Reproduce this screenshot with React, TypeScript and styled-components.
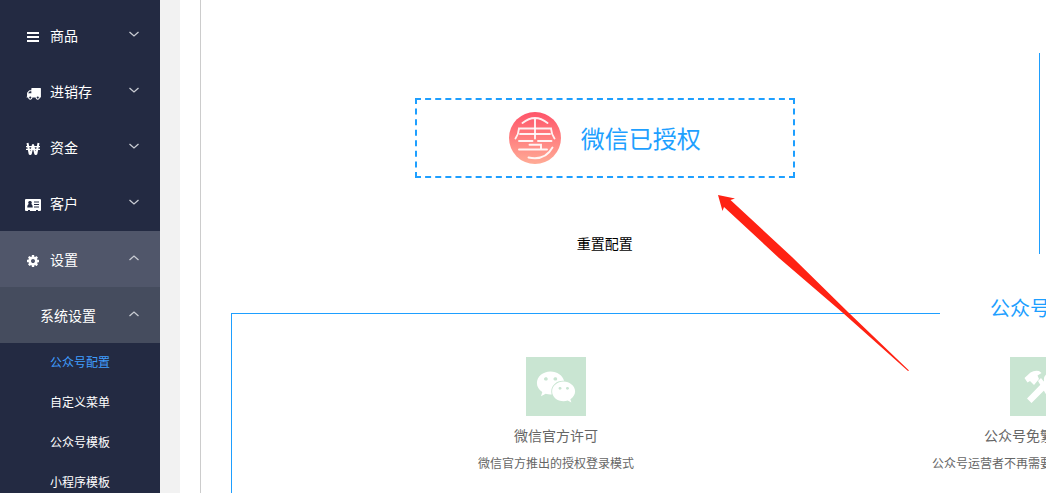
import React from "react";
import styled, { createGlobalStyle } from "styled-components";
import { FaWeixin } from "react-icons/fa";

const GlobalStyle = createGlobalStyle`
  * { box-sizing: border-box; }
  body {
    margin: 0;
    overflow: hidden;
    background: #f2f2f2;
    font-family: "Liberation Sans", "Noto Sans CJK SC", sans-serif;
    font-size: 14px;
    line-height: 20px;
    color: #000;
  }
  button { border: 0; padding: 0; background: none; font: inherit; color: inherit; cursor: pointer; }
`;

const Shell = styled.div`
  display: flex;
  height: 100vh;
  overflow: hidden;
`;

const Sidebar = styled.nav`
  flex: 0 0 160px;
  padding-top: 7px;
  overflow: hidden;
  background: #232a42;
  color: #fff;
`;

const MenuButton = styled.button<{ $tone?: "open" | "group" }>`
  display: flex;
  align-items: center;
  width: 100%;
  height: 56px;
  padding: 0 20px 0 ${(p) => (p.$tone === "group" ? 40 : 24)}px;
  background: ${(p) =>
    p.$tone === "open" ? "#50566a" : p.$tone === "group" ? "#454c5e" : "transparent"};
  text-align: left;
`;

const MenuIcon = styled.svg`
  width: 18px;
  height: 18px;
  margin: 4px 8px 0 0;
  fill: #fff;
`;

const MenuLabel = styled.span`
  flex: 1;
  padding-top: 1px;
  line-height: 20px;
`;

const Chevron = styled.svg<{ $up?: boolean }>`
  width: 12px;
  height: 8px;
  margin-bottom: 2px;
  fill: none;
  stroke: #c9ccd3;
  transform: ${(p) => (p.$up ? "rotate(180deg)" : "none")};
`;

const SubLink = styled.a<{ $active?: boolean }>`
  display: block;
  padding-left: 50px;
  font-size: 12px;
  line-height: 40px;
  color: ${(p) => (p.$active ? "#409eff" : "#fff")};
  text-decoration: none;
`;

const Main = styled.main`
  flex: 1;
  min-width: 0;
  margin-left: 20px;
  padding-left: 20px;
  overflow: hidden;
  background: #fff;
`;

const Workbench = styled.div`
  position: relative;
  min-width: 1678px;
  min-height: 100%;
  padding: 53px 30px 0;
  border-left: 1px solid #ccc;
`;

const Accounts = styled.section`
  display: grid;
  grid-template-columns: 1fr 1fr;
  height: 200px;
`;

const AuthPane = styled.div`
  display: flex;
  flex-direction: column;
  align-items: center;
  padding: 45px 60px 0 0;
  border-right: 1px solid #1e9fff;
`;

const AuthBox = styled.div`
  display: flex;
  align-items: center;
  justify-content: center;
  gap: 20px;
  width: 380px;
  height: 80px;
  border: 2px dashed #1e9fff;
  color: #1e9fff;
  font-size: 24px;
  line-height: 32px;
`;

const AuthState = styled.span`
  padding-top: 4px;
`;

const ResetButton = styled.button`
  margin-top: 56px;
  line-height: 20px;
`;

const Features = styled.fieldset`
  height: 300px;
  margin: 46px 0 0;
  padding: 30px 82px 0;
  border: 1px solid #1e9fff;
  border-width: 1px 0 0 1px;
`;

const FeaturesTitle = styled.legend`
  width: 200px;
  margin: 0 auto;
  padding: 0 50px 8px;
  color: #1e9fff;
  font-size: 20px;
  line-height: 20px;
`;

const FeatureGrid = styled.div`
  display: grid;
  grid-template-columns: repeat(3, 1fr);
`;

const Feature = styled.article`
  display: flex;
  flex-direction: column;
  align-items: center;
  color: #666;
`;

const FeatureTile = styled.div`
  display: flex;
  align-items: center;
  justify-content: center;
  width: 60px;
  height: 59px;
  background: #c9e5d2;
  color: #fff;
`;

const FeatureName = styled.h3<{ $wide?: boolean }>`
  min-width: ${(p) => (p.$wide ? 112 : 0)}px;
  margin: 10px 0 0;
  font-size: 14px;
  font-weight: 400;
  line-height: 20px;
`;

const FeatureText = styled.p<{ $wide?: boolean }>`
  min-width: ${(p) => (p.$wide ? 216 : 0)}px;
  margin: 8px 0 0;
  font-size: 12px;
  line-height: 20px;
`;

const Arrow = styled.svg`
  position: absolute;
  top: 190px;
  left: 510px;
  width: 205px;
  height: 185px;
  fill: #ff2213;
  pointer-events: none;
`;

const BarsIcon = () => (
  <MenuIcon viewBox="0 0 18 18" aria-hidden="true">
    <path d="M3 4h12v2H3zM3 8h12v2H3zM3 12h12v2H3z" />
  </MenuIcon>
);

const TruckIcon = () => (
  <MenuIcon viewBox="-240 -224 2160 2160" aria-hidden="true">
    <path d="M640 1408q0-52-38-90t-90-38-90 38-38 90 38 90 90 38 90-38 38-90zm-384-512h384v-256h-158q-13 0-22 9l-195 195q-9 9-9 22v30zm1280 512q0-52-38-90t-90-38-90 38-38 90 38 90 90 38 90-38 38-90zm256-1088v1024q0 15-4 26.500t-13.500 18.500-16.500 11.500-23.500 6-22.500 2-25.500 0-22.500-.5q0 106-75 181t-181 75-181-75-75-181h-384q0 106-75 181t-181 75-181-75-75-181h-64q-3 0-22.500.5t-25.500 0-22.500-2-23.500-6-16.500-11.500-13.500-18.500-4-26.500q0-26 19-45t45-19v-320q0-8-.5-35t0-38 2.500-34.500 6.500-37 14-30.500 22.500-30l198-198q19-19 50.500-32t58.500-13h160v-192q0-26 19-45t45-19h1024q26 0 45 19t19 45z" />
  </MenuIcon>
);

const WonIcon = () => (
  <MenuIcon viewBox="0 0 18 18" aria-hidden="true">
    <path
      d="M3.500 3l2.200 11h1L9 4.500 11.300 14h1l2.200-11"
      fill="none"
      stroke="#fff"
      strokeWidth="2"
      strokeLinejoin="bevel"
    />
    <path d="M2 6h14v1.300H2zM2 8.700h14V10H2z" />
  </MenuIcon>
);

const CardIcon = () => (
  <MenuIcon viewBox="0 0 18 18" aria-hidden="true">
    <path
      fillRule="evenodd"
      d="M2 3h14a1 1 0 0 1 1 1v10a1 1 0 0 1-1 1h-2v-1h-2v1H6v-1H4v1H2a1 1 0 0 1-1-1V4a1 1 0 0 1 1-1zM6 5a1.700 1.700 0 0 0-1.200 3C3.700 8.500 3.300 9.500 3.300 11.500h5.400c0-2-.4-3-1.500-3.500A1.700 1.700 0 0 0 6 5zM10 5.500v1h5v-1zM10 8v1h5V8zM10 10.500v1h5v-1z"
    />
  </MenuIcon>
);

const CogIcon = () => (
  <MenuIcon viewBox="-256 -256 2304 2304" aria-hidden="true">
    <path d="M1152 896q0-106-75-181t-181-75-181 75-75 181 75 181 181 75 181-75 75-181zm512-109v222q0 12-8 23t-20 13l-185 28q-19 54-39 91 35 50 107 138 10 12 10 25t-9 23q-27 37-99 108t-94 71q-12 0-26-9l-138-108q-44 23-91 38-16 136-29 186-7 28-36 28h-222q-14 0-24.500-8.500t-11.500-21.500l-28-184q-49-16-90-37l-141 107q-10 9-25 9-14 0-25-11-126-114-165-168-7-10-7-23 0-12 8-23 15-21 51-66.500t54-70.500q-27-50-41-99l-183-27q-13-2-21-12.500t-8-23.500v-222q0-12 8-23t19-13l186-28q14-46 39-92-40-57-107-138-10-12-10-24 0-10 9-23 26-36 98.500-107.500t94.500-71.500q13 0 26 10l138 107q44-23 91-38 16-136 29-186 7-28 36-28h222q14 0 24.500 8.500t11.500 21.500l28 184q49 16 90 37l142-107q9-9 24-9 13 0 25 10 129 119 165 170 7 8 7 22 0 12-8 23-15 21-51 66.500t-54 70.500q26 50 41 98l183 28q13 2 21 12.500t8 23.500z" />
  </MenuIcon>
);

const BrandLogo = () => (
  <svg width="52" height="52" viewBox="0 0 52 52" aria-hidden="true">
    <defs>
      <linearGradient id="brand" x1="0" y1="0" x2="0" y2="1">
        <stop offset="0" stopColor="#ff5469" />
        <stop offset="1" stopColor="#ffab96" />
      </linearGradient>
    </defs>
    <circle cx="26" cy="26" r="26" fill="url(#brand)" />
    <g fill="none" stroke="#fff" strokeOpacity=".9" strokeWidth="1.900" strokeLinecap="round">
      <path d="M13.500 11Q26 1 38.500 11M26 6v20.500" />
      <path d="M6.500 26.500q3-4 3.500-10h32q.5 6 3.500 10M11 22h30" />
      <path d="M10 29h13.500M29 29h13.500M20.500 32.800h11.500v4M10 37.500h28" />
      <path d="M19.500 45.500Q36 49 43.500 35.500" />
    </g>
  </svg>
);

const ToolsIcon = () => (
  <svg width="36" height="36" viewBox="0 0 36 36" fill="currentColor" aria-hidden="true">
    <path d="M2.500 9l6-5.500q4-2.500 8.500-1.500l2.500 2-4 2.500 1.500 3.500-5 6-4-4-2.500 1.500z" />
    <path d="M16 12l3-3 14 18-5 5z" />
    <path d="M5 29.500L22 12q-1-7 7-9l-2 5 2 3 5-1q0 8-8 7.500L9.500 34z" />
  </svg>
);

const menu = [
  { label: "商品", Icon: BarsIcon },
  { label: "进销存", Icon: TruckIcon },
  { label: "资金", Icon: WonIcon },
  { label: "客户", Icon: CardIcon },
  { label: "设置", Icon: CogIcon, open: true },
];

const settings = ["公众号配置", "自定义菜单", "公众号模板", "小程序模板"];

const Caret = ({ up }: { up?: boolean }) => (
  <Chevron $up={up} viewBox="0 0 12 8" aria-hidden="true">
    <path d="M1.500 2L6 6l4.500-4" strokeWidth="1.300" />
  </Chevron>
);

export default function App() {
  return (
    <>
      <GlobalStyle />
      <Shell>
        <Sidebar>
          {menu.map(({ label, Icon, open }) => (
            <MenuButton key={label} type="button" $tone={open ? "open" : undefined} aria-expanded={!!open}>
              <Icon />
              <MenuLabel>{label}</MenuLabel>
              <Caret up={open} />
            </MenuButton>
          ))}
          <MenuButton type="button" $tone="group" aria-expanded>
            <MenuLabel>系统设置</MenuLabel>
            <Caret up />
          </MenuButton>
          {settings.map((name, i) => (
            <SubLink key={name} href="#" $active={i === 0}>
              {name}
            </SubLink>
          ))}
        </Sidebar>
        <Main>
          <Workbench>
            <Accounts>
              <AuthPane>
                <AuthBox>
                  <BrandLogo />
                  <AuthState>微信已授权</AuthState>
                </AuthBox>
                <ResetButton type="button">重置配置</ResetButton>
              </AuthPane>
            </Accounts>
            <Features>
              <FeaturesTitle>公众号</FeaturesTitle>
              <FeatureGrid>
                <Feature>
                  <FeatureTile>
                    <FaWeixin size={40} />
                  </FeatureTile>
                  <FeatureName>微信官方许可</FeatureName>
                  <FeatureText>微信官方推出的授权登录模式</FeatureText>
                </Feature>
                <Feature>
                  <FeatureTile>
                    <ToolsIcon />
                  </FeatureTile>
                  <FeatureName $wide>公众号免繁</FeatureName>
                  <FeatureText $wide>公众号运营者不再需要</FeatureText>
                </Feature>
              </FeatureGrid>
            </Features>
            <Arrow viewBox="711 190 205 185" aria-hidden="true">
              <path d="M718 195L735 198.500L730.500 200L792 257L848 312L909 370.500L908 371L843 313L779 258L724 207L722.500 211Z" />
            </Arrow>
          </Workbench>
        </Main>
      </Shell>
    </>
  );
}
